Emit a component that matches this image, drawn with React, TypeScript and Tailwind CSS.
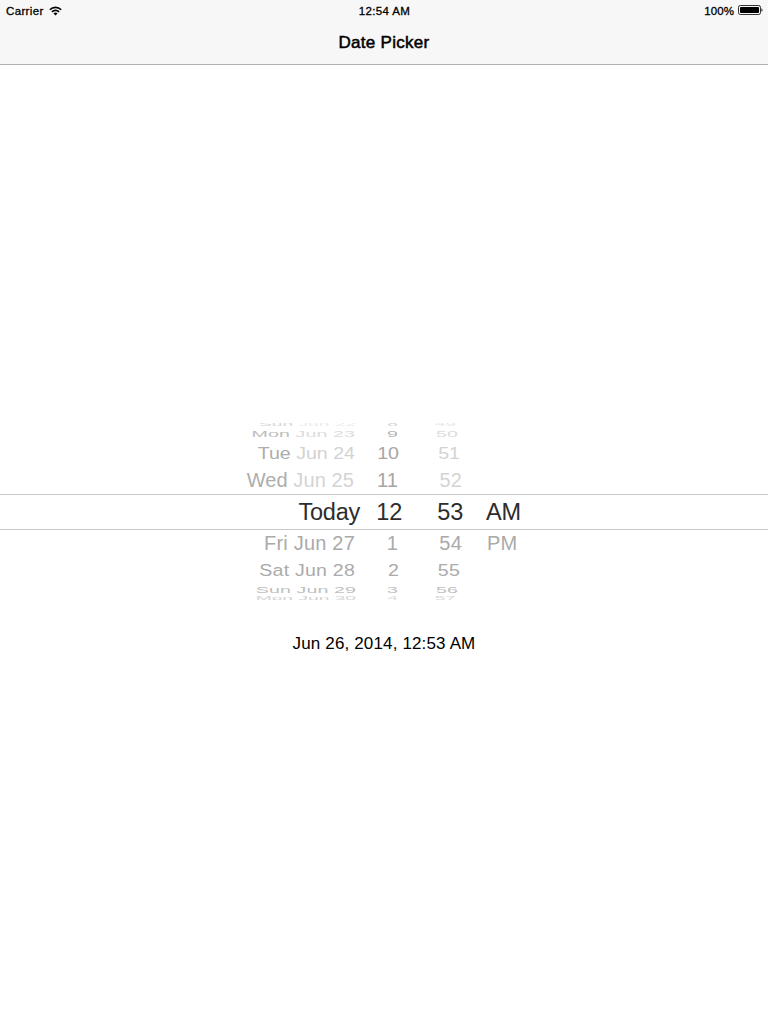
type Row = {
  day: string;
  rest?: string;
  hour: string;
  minute: string;
  period?: string;
  row: string;
  glyph: string;
  dayTone: string;
  restTone: string;
  hourTone: string;
  minuteTone: string;
};

const rows: Row[] = [
  { day: 'Sun', rest: ' Jun 22', hour: '8', minute: '49', row: 'h-[5px] grid-cols-[356px_42px_58px_1fr]', glyph: 'text-[19.2px] [transform:translateY(-1px)_scaleY(0.24)]', dayTone: 'text-[#d6d6d6]', restTone: 'text-[#ececec]', hourTone: 'text-[#d6d6d6]', minuteTone: 'text-[#e8e8e8]' },
  { day: 'Mon', rest: ' Jun 23', hour: '9', minute: '50', row: 'h-[13px] grid-cols-[355px_43px_60px_1fr]', glyph: 'text-[19.6px] tracking-[0.1px] [transform:translateY(-1.5px)_scaleY(0.5)]', dayTone: 'text-[#bdbdbd]', restTone: 'text-[#dcdcdc]', hourTone: 'text-[#b6b6b6]', minuteTone: 'text-[#dcdcdc]' },
  { day: 'Tue', rest: ' Jun 24', hour: '10', minute: '51', row: 'h-[25px] grid-cols-[355px_44px_61px_1fr]', glyph: 'text-[19.6px] [transform:translateY(-1px)_scaleY(0.8)]', dayTone: 'text-[#adadad]', restTone: 'text-[#d3d3d3]', hourTone: 'text-[#a6a6a6]', minuteTone: 'text-[#d3d3d3]' },
  { day: 'Wed', rest: ' Jun 25', hour: '11', minute: '52', row: 'h-7 grid-cols-[354px_44px_64px_1fr]', glyph: 'text-[20px] tracking-[0.1px]', dayTone: 'text-[#adadad]', restTone: 'text-[#d4d4d4]', hourTone: 'text-[#a6a6a6]', minuteTone: 'text-[#d4d4d4]' },
  { day: 'Today', hour: '12', minute: '53', period: 'AM', row: 'h-9 border-y border-[#c8c8c8] grid-cols-[360px_42px_61px_23px_1fr]', glyph: 'text-[23.5px] tracking-[-0.25px]', dayTone: 'text-[#2d2d2d]', restTone: '', hourTone: 'text-[#2d2d2d]', minuteTone: 'text-[#2d2d2d]' },
  { day: 'Fri', rest: ' Jun 27', hour: '1', minute: '54', period: 'PM', row: 'h-[27px] grid-cols-[355px_43px_64px_25px_1fr]', glyph: 'text-[20px] tracking-[0.2px] [transform:translateY(-1px)]', dayTone: 'text-[#aaaaaa]', restTone: 'text-[#aaaaaa]', hourTone: 'text-[#aaaaaa]', minuteTone: 'text-[#aaaaaa]' },
  { day: 'Sat', rest: ' Jun 28', hour: '2', minute: '55', row: 'h-[26px] grid-cols-[355px_44px_61px_1fr]', glyph: 'text-[19.6px] tracking-[0.2px] [transform:scaleY(0.8)]', dayTone: 'text-[#ababab]', restTone: 'text-[#ababab]', hourTone: 'text-[#ababab]', minuteTone: 'text-[#ababab]' },
  { day: 'Sun', rest: ' Jun 29', hour: '3', minute: '56', row: 'h-[13px] grid-cols-[356px_42px_60px_1fr]', glyph: 'text-[19.6px] tracking-[0.1px] [transform:translateY(-1px)_scaleY(0.5)]', dayTone: 'text-[#bfbfbf]', restTone: 'text-[#bfbfbf]', hourTone: 'text-[#bfbfbf]', minuteTone: 'text-[#bfbfbf]' },
  { day: 'Mon', rest: ' Jun 30', hour: '4', minute: '57', row: 'h-1 grid-cols-[356px_42px_58px_1fr]', glyph: 'text-[19.2px] [transform:translateY(0.5px)_scaleY(0.24)]', dayTone: 'text-[#d4d4d4]', restTone: 'text-[#d4d4d4]', hourTone: 'text-[#dedede]', minuteTone: 'text-[#d8d8d8]' },
];

function PickerRow({ r }: { r: Row }) {
  return (
    <div className={`grid shrink-0 items-center whitespace-pre text-right leading-[0px] ${r.row}`}>
      <span className={`${r.glyph} ${r.dayTone}`}>
        {r.day}
        {r.rest && <span className={r.restTone}>{r.rest}</span>}
      </span>
      <span className={`${r.glyph} ${r.hourTone}`}>{r.hour}</span>
      <span className={`${r.glyph} ${r.minuteTone}`}>{r.minute}</span>
      {r.period && (
        <span className={`col-start-5 text-left ${r.glyph} ${r.dayTone}`}>{r.period}</span>
      )}
    </div>
  );
}

function Wifi() {
  return (
    <svg className="ml-[5px] h-[10px] w-[13px]" viewBox="0 0 13 10" fill="none" stroke="#000" strokeWidth="1.6">
      <path d="M.8 3.7a8.1 8.1 0 0 1 11.4 0" />
      <path d="M2.9 5.9a5.1 5.1 0 0 1 7.2 0" />
      <path d="M6.5 9.4 4.5 7.4a2.9 2.9 0 0 1 4 0Z" fill="#000" stroke="none" />
    </svg>
  );
}

function Battery() {
  return (
    <svg className="mb-[2px] ml-[4px] h-[10px] w-[25px]" viewBox="0 0 25 10">
      <rect x=".5" y=".5" width="22" height="9" rx="1.8" fill="none" stroke="#000" strokeWidth=".8" />
      <rect x="2" y="2" width="19" height="6" rx=".8" />
      <path d="M23.5 3.2c1.3.5 1.3 3.1 0 3.6Z" />
    </svg>
  );
}

export default function App() {
  return (
    <div className="flex h-screen w-full flex-col overflow-hidden bg-white font-['Liberation_Sans',Arial,sans-serif] text-black">
      <header className="flex h-[65px] shrink-0 flex-col border-b border-[#b2b2b2] bg-[#f7f7f7]">
        <div className="grid h-5 grid-cols-3 items-center pl-[6px] pr-[5px] pt-px text-[11.5px] leading-5 tracking-[0.35px] [-webkit-text-stroke:0.3px_#000]">
          <div className="flex items-center">Carrier<Wifi /></div>
          <div className="text-center">12:54 AM</div>
          <div className="flex items-center justify-end"><span className="tracking-[0.1px]">100%</span><Battery /></div>
        </div>
        <h1 className="flex h-11 items-center justify-center pt-[2px] text-[17px] tracking-[0.3px] [-webkit-text-stroke:0.5px_#000]">Date Picker</h1>
      </header>
      <main className="flex flex-col pt-[358px]">
        <div className="flex h-[177px] flex-col overflow-hidden">
          {rows.map((r) => (
            <PickerRow key={`${r.day}${r.rest ?? ''}`} r={r} />
          ))}
        </div>
        <p className="mt-8 text-center text-[17px] leading-6 tracking-[0.15px]">Jun 26, 2014, 12:53 AM</p>
      </main>
    </div>
  );
}
